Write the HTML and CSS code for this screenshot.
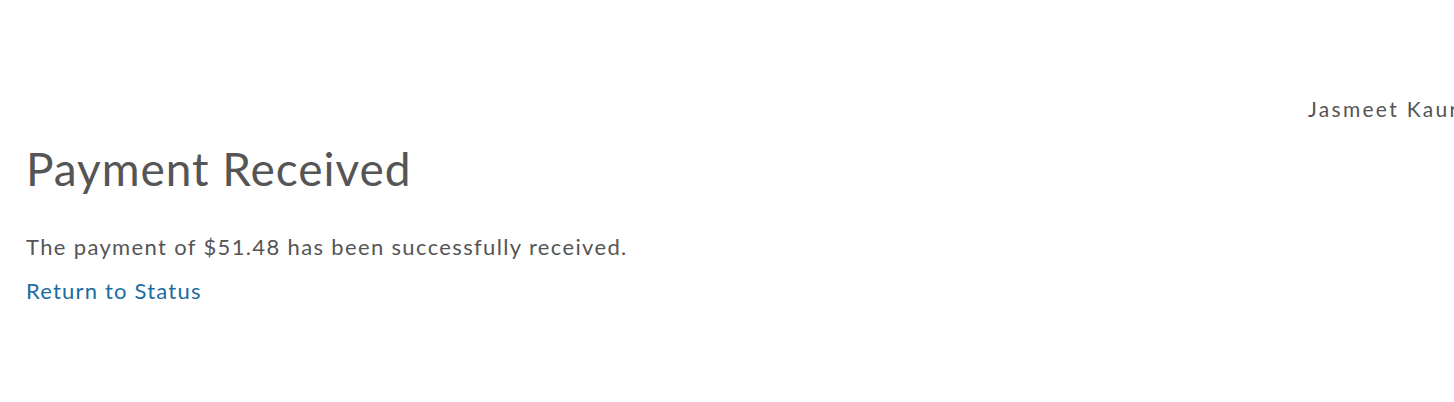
FILE: index.html
```html
<!DOCTYPE html>
<html>
<head>
  <title>Payment Received</title>
  <link rel="stylesheet" href="styles.css">
</head>
<body>
  <div class="topbar">
    <span class="user-name">Jasmeet Kaur</span>
  </div>
  <div class="container">
    <h1>Payment Received</h1>
    <p>The payment of $51.48 has been successfully received.</p>
    <a href="status.html">Return to Status</a>
  </div>
</body>
</html>
```

FILE: styles.css
```css
html, body {
  overflow-x: hidden;
}

body {
  margin: 0;
  padding: 0;
  background-color: #FFF;
  color: #555;
  font-family: Lato, "Open Sans", sans-serif;
}

.topbar {
  display: flex;
  justify-content: flex-end;
  padding-top: 96px;
  height: 30px;
}

.user-name {
  width: 146px;
  white-space: nowrap;
  font-size: 21px;
  letter-spacing: 2.3px;
}

.container {
  padding: 0 26px;
}

h1 {
  font-size: 46px;
  font-weight: 400;
  letter-spacing: 0.95px;
  margin: 15px 0 37px;
}

p {
  font-size: 22px;
  letter-spacing: 1.35px;
  margin: 0 0 17px;
}

a {
  font-size: 22px;
  letter-spacing: 1.2px;
  color: #1a6ca3;
  text-decoration: none;
}
```
